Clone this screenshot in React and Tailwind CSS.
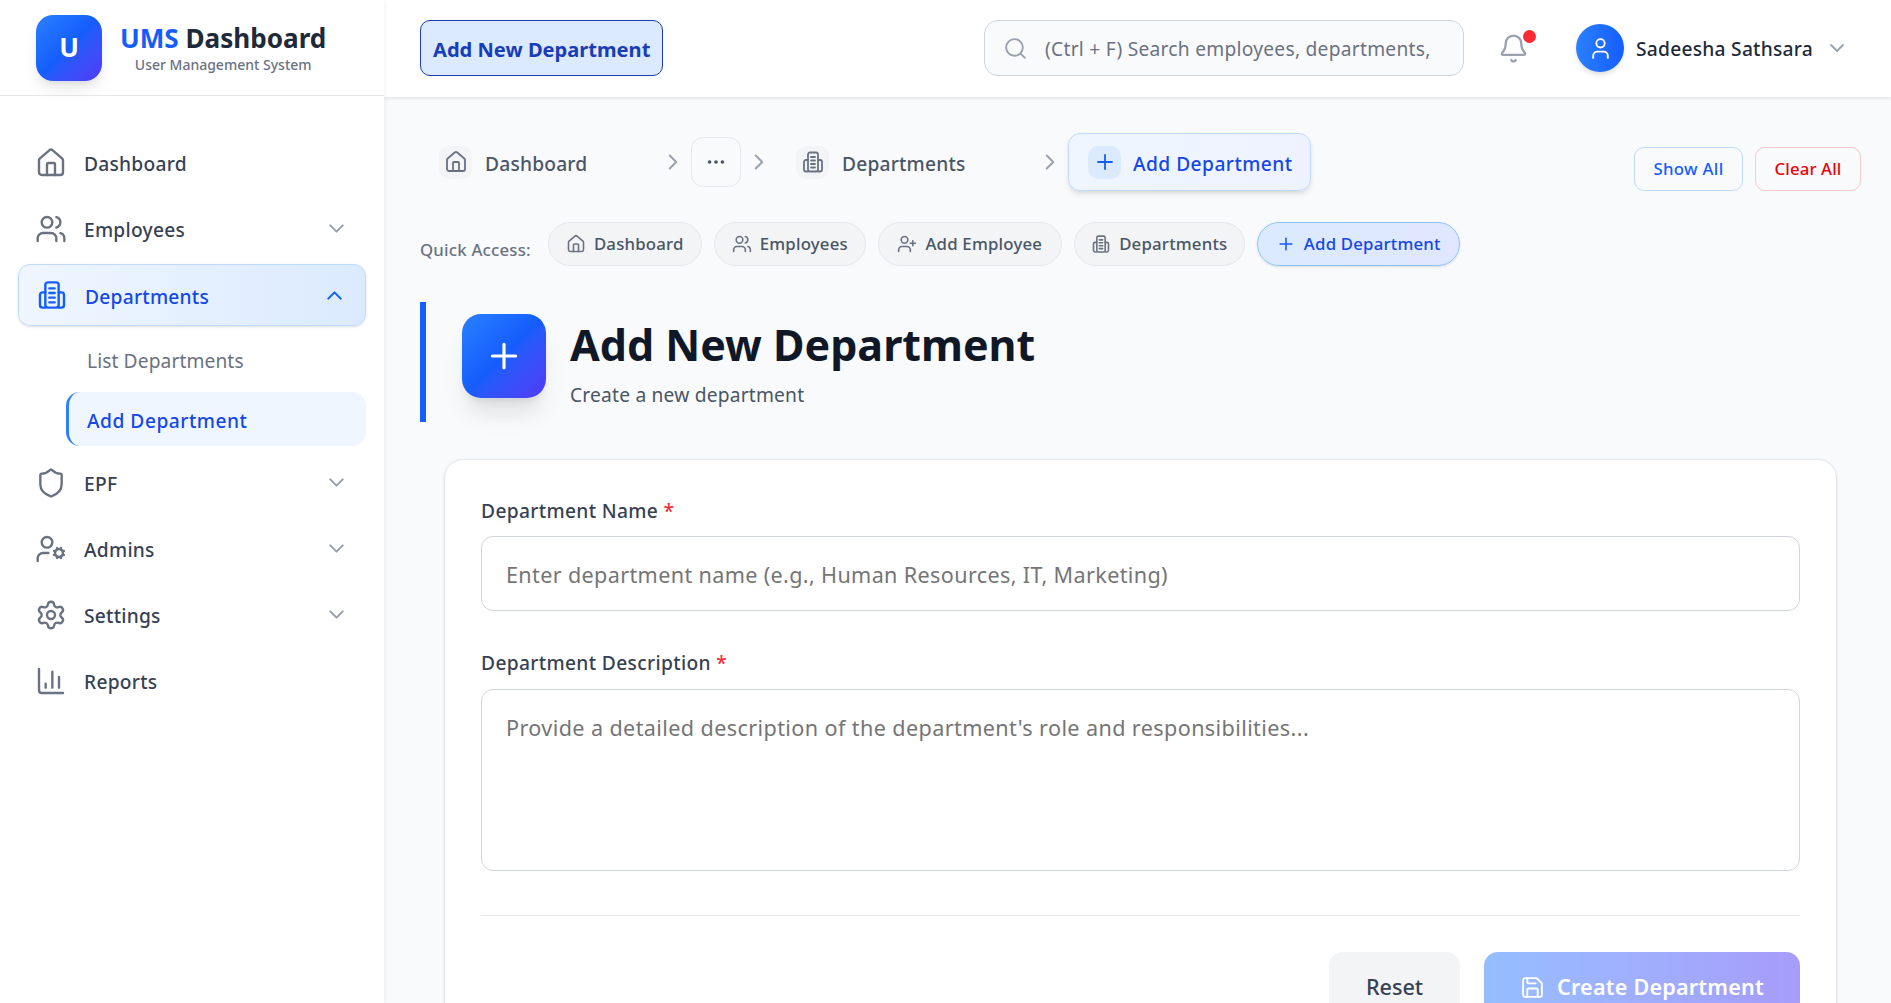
import React from "react";
import {
  Bell,
  ChartColumn,
  ChevronDown,
  ChevronRight,
  ChevronUp,
  Ellipsis,
  House,
  Plus,
  Save,
  Search,
  Settings,
  Shield,
  User,
  UserCog,
  UserPlus,
  Users,
} from "lucide-react";

const font = { fontFamily: '"Noto Sans", sans-serif' };

// tower with two side wings, lucide has nothing this close
const Building = ({ size = 24, strokeWidth = 2, className }) => (
  <svg
    width={size}
    height={size}
    viewBox="0 0 24 24"
    fill="none"
    stroke="currentColor"
    strokeWidth={strokeWidth}
    strokeLinecap="round"
    strokeLinejoin="round"
    className={className}
  >
    <rect x="7" y="2.5" width="10" height="19" rx="2" />
    <path d="M7 10H5a2 2 0 0 0-2 2v7.5a2 2 0 0 0 2 2h2" />
    <path d="M17 10h2a2 2 0 0 1 2 2v7.5a2 2 0 0 1-2 2h-2" />
    <path d="M10 7h4M10 10.5h4M10 14h4M10 17.5h4" />
  </svg>
);

const NavItem = ({ icon: Icon, label, chevron }) => (
  <div className="flex items-center h-[66px] pl-[35px] pr-[35px] text-gray-700">
    <Icon size={32} strokeWidth={1.8} className="text-gray-500 shrink-0" />
    <span className="ml-[17px] pt-[2px] text-[19.2px] tracking-[0.25px] font-medium flex-1">{label}</span>
    {chevron && <ChevronDown size={25} strokeWidth={2} className="text-gray-400 mb-[2px]" />}
  </div>
);

const Pill = ({ icon: Icon, label, width, active }) => (
  <div
    className={
      active
        ? `flex items-center justify-center gap-[8px] h-[44px] ${width} rounded-full border border-blue-300 bg-gradient-to-r from-blue-100 to-indigo-100 text-blue-700 text-[16.8px] tracking-[0.2px] font-medium shadow-sm`
        : `flex items-center justify-center gap-[8px] h-[44px] ${width} rounded-full border border-gray-200 bg-gray-100 text-gray-600 text-[16.8px] tracking-[0.2px] font-medium`
    }
  >
    <Icon size={20} strokeWidth={1.9} className={active ? "text-blue-600" : "text-gray-500"} />
    {label}
  </div>
);

const Crumb = ({ icon: Icon, label, width }) => (
  <div className={`flex items-center gap-[13px] ${width}`}>
    <div className="w-[33px] h-[33px] rounded-[10px] bg-gray-100 flex items-center justify-center">
      <Icon size={24} strokeWidth={1.8} className="text-gray-500" />
    </div>
    <span className="pt-[4px] text-[19.2px] tracking-[0.2px] font-medium text-gray-600">{label}</span>
  </div>
);

const App = () => {
  return (
    <div className="flex h-screen overflow-hidden bg-gray-50" style={font}>
      {/* sidebar */}
      <aside className="w-[384px] shrink-0 bg-white shadow-[0_0_6px_rgba(0,0,0,0.08)] z-20">
        <div className="h-[96px] border-b border-gray-200 flex items-center pl-[36px]">
          <div className="w-[66px] h-[66px] rounded-[17px] bg-gradient-to-br from-blue-500 via-blue-600 to-indigo-600 flex items-center justify-center text-white text-[26px] font-bold shadow-lg">
            U
          </div>
          <div className="ml-[18px] flex flex-col items-center">
            <div className="text-[26.1px] leading-[32px] font-bold text-gray-800 pb-[2px]">
              <span className="text-blue-600">UMS</span> Dashboard
            </div>
            <div className="text-[14px] leading-[18px] font-medium text-gray-500">User Management System</div>
          </div>
        </div>
        <nav className="pt-[34px]">
          <NavItem icon={House} label="Dashboard" />
          <NavItem icon={Users} label="Employees" chevron />
          <div className="mt-[2px] mx-[18px] h-[62px] flex items-center justify-between pr-[18px] rounded-[12px] border border-blue-200 bg-gradient-to-r from-blue-50 to-blue-100 text-blue-700 shadow-sm">
            <div className="flex items-center">
              <Building size={32} strokeWidth={1.8} className="text-blue-600 ml-[17px]" />
              <span className="ml-[17px] pt-[4px] text-[19.2px] tracking-[0.25px] font-medium">Departments</span>
            </div>
            <ChevronUp size={25} strokeWidth={2} className="text-blue-600" />
          </div>
          <div className="h-[66px] flex items-center pl-[87px] pt-[4px] text-[19.2px] tracking-[0.1px] text-gray-500">
            List Departments
          </div>
          <div className="ml-[66px] mr-[18px] h-[54px] flex items-center pl-[18px] pt-[4px] rounded-[14px] border-l-[3px] border-blue-500 bg-blue-50 text-[19.2px] tracking-[0.5px] font-medium text-blue-700">
            Add Department
          </div>
          <div className="h-[4px]" />
          <NavItem icon={Shield} label="EPF" chevron />
          <NavItem icon={UserCog} label="Admins" chevron />
          <NavItem icon={Settings} label="Settings" chevron />
          <NavItem icon={ChartColumn} label="Reports" />
        </nav>
      </aside>

      <div className="flex-1 min-w-0 flex flex-col">
        {/* top bar */}
        <header className="h-[97px] shrink-0 pb-[1px] bg-white shadow-[0_1px_4px_rgba(0,0,0,0.12)] z-10 flex items-center pl-[36px] pr-[42px]">
          <div className="h-[56px] flex items-center px-[12px] pt-[4px] rounded-[10px] border-[1.5px] border-blue-800 bg-blue-100 text-blue-800 text-[20.1px] font-bold">
            Add New Department
          </div>
          <div className="ml-auto w-[480px] h-[56px] flex items-center pl-[18px] rounded-[14px] border border-gray-300 bg-gray-50">
            <Search size={25} strokeWidth={1.8} className="text-gray-400 shrink-0" />
            <input
              placeholder="(Ctrl + F) Search employees, departments,"
              className="ml-[17px] flex-1 min-w-0 pt-[3px] bg-transparent outline-none text-[19.2px] tracking-[0.26px] placeholder:text-gray-500"
            />
          </div>
          <div className="relative ml-[34px]">
            <Bell size={31} strokeWidth={1.8} className="text-gray-400" />
            <span className="absolute -top-[3px] right-[-7px] w-[13px] h-[13px] rounded-full bg-red-500" />
          </div>
          <div className="ml-[47px] w-[48px] h-[48px] rounded-full bg-gradient-to-r from-blue-500 to-blue-600 flex items-center justify-center shadow-md">
            <User size={25} strokeWidth={1.8} className="text-white" />
          </div>
          <span className="ml-[12px] pt-[3px] text-[19.2px] tracking-[0.25px] font-medium text-gray-800 whitespace-nowrap">
            Sadeesha Sathsara
          </span>
          <ChevronDown size={24} strokeWidth={1.8} className="ml-[12px] text-gray-400" />
        </header>

        {/* content */}
        <main className="flex-1 overflow-hidden pt-[36px] pl-[36px] pr-[30px]">
          <div className="flex items-center h-[58px]">
            <div className="flex items-center pl-[19px]">
              <Crumb icon={House} label="Dashboard" width="w-[219px]" />
              <ChevronRight size={26} strokeWidth={1.8} className="text-gray-400 ml-[2px]" />
              <div className="ml-[5px] w-[50px] h-[50px] rounded-[12px] border border-gray-200 flex items-center justify-center text-gray-600">
                <Ellipsis size={22} />
              </div>
              <ChevronRight size={26} strokeWidth={1.8} className="text-gray-400 ml-[5px]" />
              <div className="ml-[24px]">
                <Crumb icon={Building} label="Departments" width="w-[233px]" />
              </div>
              <ChevronRight size={26} strokeWidth={1.8} className="text-gray-400 ml-[8px]" />
              <div className="ml-[5px] h-[58px] w-[243px] flex items-center pl-[19px] rounded-[12px] border border-blue-200 bg-gradient-to-r from-blue-50 to-indigo-50 shadow-md">
                <div className="w-[33px] h-[33px] rounded-[10px] bg-blue-100 flex items-center justify-center">
                  <Plus size={24} strokeWidth={1.8} className="text-blue-600" />
                </div>
                <span className="ml-[12px] pt-[4px] text-[19.2px] tracking-[0.45px] font-medium text-blue-700">Add Department</span>
              </div>
            </div>
            <div className="ml-auto flex gap-[12px] mt-[14px]">
              <div className="h-[44px] w-[109px] flex items-center justify-center rounded-[10px] border border-blue-200 text-blue-600 text-[16.8px] tracking-[0.3px] font-medium">
                Show All
              </div>
              <div className="h-[44px] w-[106px] flex items-center justify-center rounded-[10px] border border-red-200 text-red-600 text-[16.8px] tracking-[0.1px] font-medium">
                Clear All
              </div>
            </div>
          </div>

          <div className="mt-[31px] flex items-center">
            <span className="text-[16.8px] tracking-[0.2px] font-medium text-gray-500 mt-[12px]">Quick Access:</span>
            <div className="ml-[17px] flex gap-[12px]">
              <Pill icon={House} label="Dashboard" width="w-[154px]" />
              <Pill icon={Users} label="Employees" width="w-[152px]" />
              <Pill icon={UserPlus} label="Add Employee" width="w-[184px]" />
              <Pill icon={Building} label="Departments" width="w-[171px]" />
              <Pill icon={Plus} label="Add Department" width="w-[203px]" active />
            </div>
          </div>

          <div className="mt-[36px] h-[120px] border-l-[6px] border-blue-600 flex items-start pl-[36px] pt-[12px]">
            <div className="w-[84px] h-[84px] rounded-[19px] bg-gradient-to-br from-blue-500 via-blue-600 to-indigo-600 flex items-center justify-center shadow-xl">
              <Plus size={40} strokeWidth={1.9} className="text-white" />
            </div>
            <div className="ml-[24px] mt-[5px]">
              <h1 className="text-[43px] leading-[52px] font-bold text-gray-900">Add New Department</h1>
              <p className="mt-[11px] text-[19.2px] leading-[26px] tracking-[0.2px] text-gray-600">Create a new department</p>
            </div>
          </div>

          <div className="mt-[37px] ml-[24px] w-[1393px] rounded-[19px] border border-gray-200 bg-white shadow-sm px-[36px] pt-[37px] pb-[30px]">
            <label className="block text-[19.2px] leading-[28px] tracking-[0.35px] font-medium text-gray-700">
              Department Name <span className="text-red-500">*</span>
            </label>
            <input
              placeholder="Enter department name (e.g., Human Resources, IT, Marketing)"
              className="mt-[11px] block w-full h-[75px] px-[24px] pt-[2px] rounded-[12px] border border-gray-300 outline-none text-[21.6px] tracking-[0.35px] placeholder:text-[#757575]"
            />
            <label className="block mt-[38px] text-[19.2px] leading-[28px] tracking-[0.35px] font-medium text-gray-700">
              Department Description <span className="text-red-500">*</span>
            </label>
            <textarea
              placeholder="Provide a detailed description of the department's role and responsibilities..."
              className="mt-[12px] block w-full h-[182px] px-[24px] pt-[22px] rounded-[12px] border border-gray-300 outline-none resize-none text-[21.6px] tracking-[0.39px] placeholder:text-[#757575]"
            />
            <div className="mt-[44px] border-t border-gray-200 pt-[36px] flex justify-end gap-[24px]">
              <div className="w-[131px] h-[70px] flex items-center justify-center rounded-[14px] bg-gray-100 text-[21.6px] font-medium text-gray-700">
                Reset
              </div>
              <div className="w-[316px] h-[70px] flex items-center justify-center gap-[12px] rounded-[14px] bg-gradient-to-r from-blue-500 to-indigo-600 opacity-50 text-[21.6px] tracking-[0.2px] font-semibold text-white">
                <Save size={25} strokeWidth={1.8} />
                Create Department
              </div>
            </div>
          </div>
        </main>
      </div>
    </div>
  );
};

export default App;
